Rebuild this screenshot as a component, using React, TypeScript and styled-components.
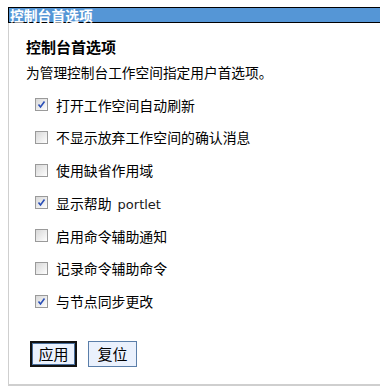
import React, { FunctionComponent } from "react"
import styled, { createGlobalStyle } from "styled-components"

const GlobalStyle = createGlobalStyle`
    html, body {
        margin: 0;
        padding: 0;
        background: #ffffff;
        overflow: hidden;
    }
    body {
        font-family: "DejaVu Sans", "Noto Sans CJK SC", sans-serif;
        color: #000000;
    }
    #root {
        width: 380px;
        overflow: hidden;
    }
`

const Page = styled.div`
    padding: 7px 0 0 8px;
`

const Portlet = styled.div`
    display: flex;
    flex-direction: column;
`

const TitleBar = styled.div`
    height: 14px;
    border: 1px solid #000000;
    border-right: none;
    background: #5596d6;
    color: #ffffff;
    font-family: "Noto Sans CJK SC", sans-serif;
    font-weight: bold;
    font-size: 13.8px;
    line-height: 14px;
    padding-left: 1px;
    white-space: nowrap;
`

const Body = styled.div`
    border-left: 1px solid #cfcfcf;
    border-bottom: 2px solid #cfcfcf;
    height: 363px;
    box-sizing: border-box;
    padding: 13px 0 0 17px;
    display: flex;
    flex-direction: column;
`

const Heading = styled.h2`
    margin: 0;
    font-family: "Noto Sans CJK SC", sans-serif;
    font-size: 15px;
    font-weight: bold;
    line-height: 22px;
`

const Description = styled.p`
    margin: 3px 0 0;
    font-family: "Noto Sans CJK SC", sans-serif;
    font-size: 13.7px;
    line-height: 22px;
`

const OptionList = styled.div`
    display: flex;
    flex-direction: column;
    gap: 11.8px;
    margin-top: 11px;
    padding-left: 9px;
`

const OptionRow = styled.label`
    display: flex;
    align-items: center;
    gap: 8px;
    height: 21px;
    font-family: "Noto Sans CJK SC", sans-serif;
    font-size: 13.9px;
`

const Box = styled.span<{ $checked?: boolean }>`
    display: inline-flex;
    align-items: center;
    justify-content: center;
    width: 11px;
    height: 11px;
    border: 1px solid #9a9a9a;
    background: linear-gradient(135deg, #d8d8d8 0%, #f2f2f2 70%, #ffffff 100%);
    flex-shrink: 0;
    svg { display: block; }
`

const Latin = styled.span`
    font-family: "DejaVu Sans", sans-serif;
    font-size: 13px;
    margin-left: 6px;
    color: #1a1a1a;
`

const Actions = styled.div`
    display: flex;
    gap: 11px;
    margin-top: 29px;
    padding-left: 4px;
`

const Button = styled.button<{ $primary?: boolean }>`
    height: 26px;
    padding: 0 6px;
    background: #eaf1fd;
    border: ${p => (p.$primary ? "2px solid #111111" : "1px solid #5a7ea9")};
    box-shadow: ${p => (p.$primary ? "inset 0 0 0 1px #4a6f9c" : "none")};
    font-family: "Noto Sans CJK SC", sans-serif;
    font-size: 15px;
    line-height: 20px;
    color: #000000;
    cursor: pointer;
    min-width: ${p => (p.$primary ? "47px" : "49px")};
`

const CheckBox: FunctionComponent<{ checked?: boolean }> = ({ checked }) => (
    <Box $checked={checked}>
        {checked && (
            <svg width="9" height="9" viewBox="0 0 9 9">
                <path d="M1.5 4.5 L3.5 7 L7.5 1.5" fill="none" stroke="#2a4fb8" strokeWidth="1.6" />
            </svg>
        )}
    </Box>
)

const options: { label: string, checked: boolean, latin?: string }[] = [
    { label: "打开工作空间自动刷新", checked: true },
    { label: "不显示放弃工作空间的确认消息", checked: false },
    { label: "使用缺省作用域", checked: false },
    { label: "显示帮助", checked: true, latin: "portlet" },
    { label: "启用命令辅助通知", checked: false },
    { label: "记录命令辅助命令", checked: false },
    { label: "与节点同步更改", checked: true },
]

const App: FunctionComponent = () => {
    return (
        <Page>
            <GlobalStyle />
            <Portlet>
                <TitleBar>控制台首选项</TitleBar>
                <Body>
                    <Heading>控制台首选项</Heading>
                    <Description>为管理控制台工作空间指定用户首选项。</Description>
                    <OptionList>
                        {options.map(o => (
                            <OptionRow key={o.label}>
                                <CheckBox checked={o.checked} />
                                <span>
                                    {o.label}
                                    {o.latin && <Latin>{o.latin}</Latin>}
                                </span>
                            </OptionRow>
                        ))}
                    </OptionList>
                    <Actions>
                        <Button $primary>应用</Button>
                        <Button>复位</Button>
                    </Actions>
                </Body>
            </Portlet>
        </Page>
    )
}

export default App
